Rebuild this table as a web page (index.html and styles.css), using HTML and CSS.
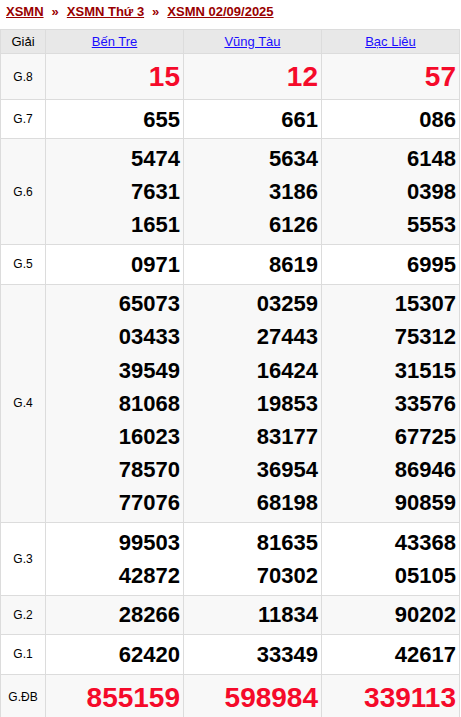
FILE: index.html
```html
<!DOCTYPE html>
<html lang="vi">
<head>
<meta charset="utf-8">
<title>XSMN 02/09/2025</title>
<link rel="stylesheet" href="styles.css">
</head>
<body>
<div class="crumbs">
  <a href="#">XSMN</a><span class="sep">»</span><a href="#">XSMN Thứ 3</a><span class="sep">»</span><a href="#">XSMN 02/09/2025</a>
</div>
<table class="kq">
  <thead>
    <tr>
      <th class="giai">Giải</th>
      <th><a href="#">Bến Tre</a></th>
      <th><a href="#">Vũng Tàu</a></th>
      <th><a href="#">Bạc Liêu</a></th>
    </tr>
  </thead>
  <tbody>
    <tr class="odd">
      <td class="giai">G.8</td>
      <td class="big"><div>15</div></td>
      <td class="big"><div>12</div></td>
      <td class="big"><div>57</div></td>
    </tr>
    <tr>
      <td class="giai">G.7</td>
      <td><div>655</div></td>
      <td><div>661</div></td>
      <td><div>086</div></td>
    </tr>
    <tr class="odd">
      <td class="giai">G.6</td>
      <td><div>5474</div><div>7631</div><div>1651</div></td>
      <td><div>5634</div><div>3186</div><div>6126</div></td>
      <td><div>6148</div><div>0398</div><div>5553</div></td>
    </tr>
    <tr>
      <td class="giai">G.5</td>
      <td><div>0971</div></td>
      <td><div>8619</div></td>
      <td><div>6995</div></td>
    </tr>
    <tr class="odd">
      <td class="giai">G.4</td>
      <td><div>65073</div><div>03433</div><div>39549</div><div>81068</div><div>16023</div><div>78570</div><div>77076</div></td>
      <td><div>03259</div><div>27443</div><div>16424</div><div>19853</div><div>83177</div><div>36954</div><div>68198</div></td>
      <td><div>15307</div><div>75312</div><div>31515</div><div>33576</div><div>67725</div><div>86946</div><div>90859</div></td>
    </tr>
    <tr>
      <td class="giai">G.3</td>
      <td><div>99503</div><div>42872</div></td>
      <td><div>81635</div><div>70302</div></td>
      <td><div>43368</div><div>05105</div></td>
    </tr>
    <tr class="odd">
      <td class="giai">G.2</td>
      <td><div>28266</div></td>
      <td><div>11834</div></td>
      <td><div>90202</div></td>
    </tr>
    <tr>
      <td class="giai">G.1</td>
      <td><div>62420</div></td>
      <td><div>33349</div></td>
      <td><div>42617</div></td>
    </tr>
    <tr class="odd">
      <td class="giai">G.ĐB</td>
      <td class="big"><div>855159</div></td>
      <td class="big"><div>598984</div></td>
      <td class="big"><div>339113</div></td>
    </tr>
  </tbody>
</table>
</body>
</html>
```
FILE: styles.css
```css
html, body {
  margin: 0;
  padding: 0;
  background: #fff;
  font-family: "Liberation Sans", Arial, sans-serif;
}

.crumbs {
  padding: 0 6px;
  height: 23px;
  line-height: 23px;
  margin-bottom: 6px;
  font-size: 13px;
  font-weight: bold;
  color: #990000;
  white-space: nowrap;
}

.crumbs a {
  color: #990000;
  text-decoration: underline;
}

.crumbs .sep {
  margin: 0 8px;
}

.kq {
  width: 460px;
  border-collapse: collapse;
  table-layout: fixed;
}

.kq th,
.kq td {
  border: 1px solid #dcdcdc;
}

.kq th {
  background: #e8e8e8;
  height: 23px;
  padding: 0;
  font-size: 13px;
  font-weight: normal;
  text-align: center;
  vertical-align: middle;
}

.kq th.giai {
  width: 44px;
  color: #000;
}

.kq th a {
  color: #1a0dff;
  text-decoration: underline;
}

.kq td {
  padding: 2.6px 3px 2.6px 4px;
  text-align: right;
  vertical-align: middle;
  font-size: 22px;
  font-weight: bold;
  line-height: 33.2px;
  color: #000;
}

.kq td.giai {
  text-align: center;
  font-size: 12px;
  font-weight: normal;
  padding: 0;
  line-height: 14px;
}

.kq tr.odd td {
  background: #f8f8f8;
}

.kq td.big {
  padding-top: 3px;
  padding-bottom: 3px;
  font-size: 28px;
  line-height: 39px;
  color: #f50a2a;
}
```
